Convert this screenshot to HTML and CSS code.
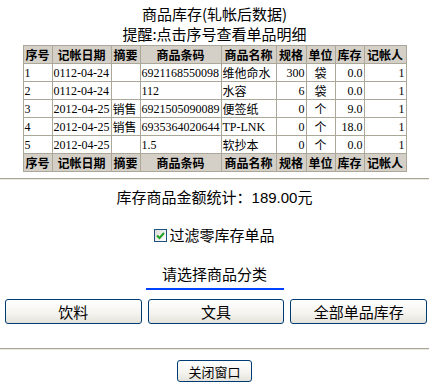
FILE: index.html
```html
<!DOCTYPE html>
<html lang="zh-CN">
<head>
  <meta charset="UTF-8" />
  <title>商品库存</title>
  <link rel="stylesheet" href="styles.css">
</head>
<body>
  <!-- 标题 -->
  <div class="title">
    <div>商品库存(轧帐后数据)</div>
    <div>提醒:点击序号查看单品明细</div>
  </div>

  <!-- 库存表 -->
  <table class="stock">
    <colgroup>
      <col style="width:29px"><col style="width:59px"><col style="width:29px">
      <col style="width:81px"><col style="width:55px"><col style="width:30px">
      <col style="width:29px"><col style="width:29px"><col style="width:42px">
    </colgroup>
    <thead>
      <tr><th>序号</th><th>记帐日期</th><th>摘要</th><th>商品条码</th><th>商品名称</th><th>规格</th><th>单位</th><th>库存</th><th>记帐人</th></tr>
    </thead>
    <tbody>
      <tr><td>1</td><td>0112-04-24</td><td></td><td>6921168550098</td><td class="cn">维他命水</td><td class="num">300</td><td class="mid cn">袋</td><td class="num">0.0</td><td class="num">1</td></tr>
      <tr><td>2</td><td>0112-04-24</td><td></td><td>112</td><td class="cn">水容</td><td class="num">6</td><td class="mid cn">袋</td><td class="num">0.0</td><td class="num">1</td></tr>
      <tr><td>3</td><td>2012-04-25</td><td class="cn">销售</td><td>6921505090089</td><td class="cn">便签纸</td><td class="num">0</td><td class="mid cn">个</td><td class="num">9.0</td><td class="num">1</td></tr>
      <tr><td>4</td><td>2012-04-25</td><td class="cn">销售</td><td>6935364020644</td><td>TP-LNK</td><td class="num">0</td><td class="mid cn">个</td><td class="num">18.0</td><td class="num">1</td></tr>
      <tr><td>5</td><td>2012-04-25</td><td></td><td>1.5</td><td class="cn">软抄本</td><td class="num">0</td><td class="mid cn">个</td><td class="num">0.0</td><td class="num">1</td></tr>
    </tbody>
    <tfoot>
      <tr><th>序号</th><th>记帐日期</th><th>摘要</th><th>商品条码</th><th>商品名称</th><th>规格</th><th>单位</th><th>库存</th><th>记帐人</th></tr>
    </tfoot>
  </table>

  <hr class="line" />

  <div class="total">库存商品金额统计：<span class="money">189.00</span>元</div>

  <div class="filter">
    <span class="check">
      <svg width="9" height="9" viewBox="0 0 9 9"><path d="M1 4.5 L3.5 7 L8 2" fill="none" stroke="#21a121" stroke-width="2"/></svg>
    </span>过滤零库存单品
  </div>

  <!-- 分类选择 -->
  <div class="pick">请选择商品分类</div>
  <div class="pick-bar"></div>
  <div class="cats">
    <button class="xp-btn">饮料</button>
    <button class="xp-btn">文具</button>
    <button class="xp-btn">全部单品库存</button>
  </div>

  <hr class="line bottom" />

  <div class="close-row">
    <button class="xp-btn close">关闭窗口</button>
  </div>
</body>
</html>
```
FILE: styles.css
```css
body {
  margin: 0;
  background-color: #fff;
  color: #000;
  font-family: "Noto Sans CJK SC", sans-serif;
}

/* 标题 */
.title {
  padding-top: 4px;
  text-align: center;
  font-size: 15px;
  line-height: 20px;
}

/* 库存表 */
.stock {
  margin: 1px auto 0;
  width: 383px;
  table-layout: fixed;
  border-collapse: collapse;
  font-family: "Liberation Serif", "Noto Sans CJK SC", serif;
  font-size: 12px;
}

.stock th,
.stock td {
  height: 17px;
  padding: 0 1px;
  border: 1px solid #aca899;
  white-space: nowrap;
  overflow: hidden;
  line-height: 16px;
}

.stock th {
  background-color: #d4d0c8;
  font-family: "Noto Sans CJK SC", sans-serif;
  font-weight: 700;
  text-align: center;
}

.stock td.cn {
  font-family: "Noto Sans CJK SC", sans-serif;
}

.stock td.num {
  text-align: right;
}

.stock td.mid {
  text-align: center;
}

/* 横线 */
.line {
  margin: 6px 0 0;
  border: 0;
  border-top: 1px solid #aca899;
  border-bottom: 1px solid #e8e6de;
}

.line.bottom {
  margin-top: 24px;
}

.total {
  margin-top: 7px;
  text-align: center;
  font-size: 15px;
  line-height: 20px;
}

.money {
  font-family: "Liberation Sans", sans-serif;
}

/* 过滤勾选框 */
.filter {
  margin-top: 17px;
  display: flex;
  justify-content: center;
  align-items: center;
  font-size: 15px;
  line-height: 20px;
}

.check {
  width: 11px;
  height: 11px;
  margin-right: 2px;
  border: 1px solid #1c5180;
  background: linear-gradient(135deg, #dcdcd7, #fff);
  display: flex;
  justify-content: center;
  align-items: center;
}

/* 分类 */
.pick {
  margin-top: 19px;
  text-align: center;
  font-size: 15px;
  line-height: 20px;
}

.pick-bar {
  width: 138px;
  height: 2px;
  margin: 4px auto 0;
  background-color: #0040ff;
}

.cats {
  display: flex;
  gap: 6px;
  padding: 9px 2px 0 5px;
}

.xp-btn {
  height: 25px;
  padding: 0;
  border: 1px solid #003c74;
  border-radius: 3px;
  background: linear-gradient(#fff 0%, #f4f3ee 60%, #e3e2da 100%);
  font-family: "Noto Sans CJK SC", sans-serif;
  font-size: 15px;
  line-height: 22px;
  color: #000;
  cursor: pointer;
}

.cats .xp-btn {
  flex: 1;
}

.close-row {
  padding-top: 10px;
  display: flex;
  justify-content: center;
}

.xp-btn.close {
  width: 75px;
  height: 22px;
  font-size: 13px;
  line-height: 19px;
}
```
